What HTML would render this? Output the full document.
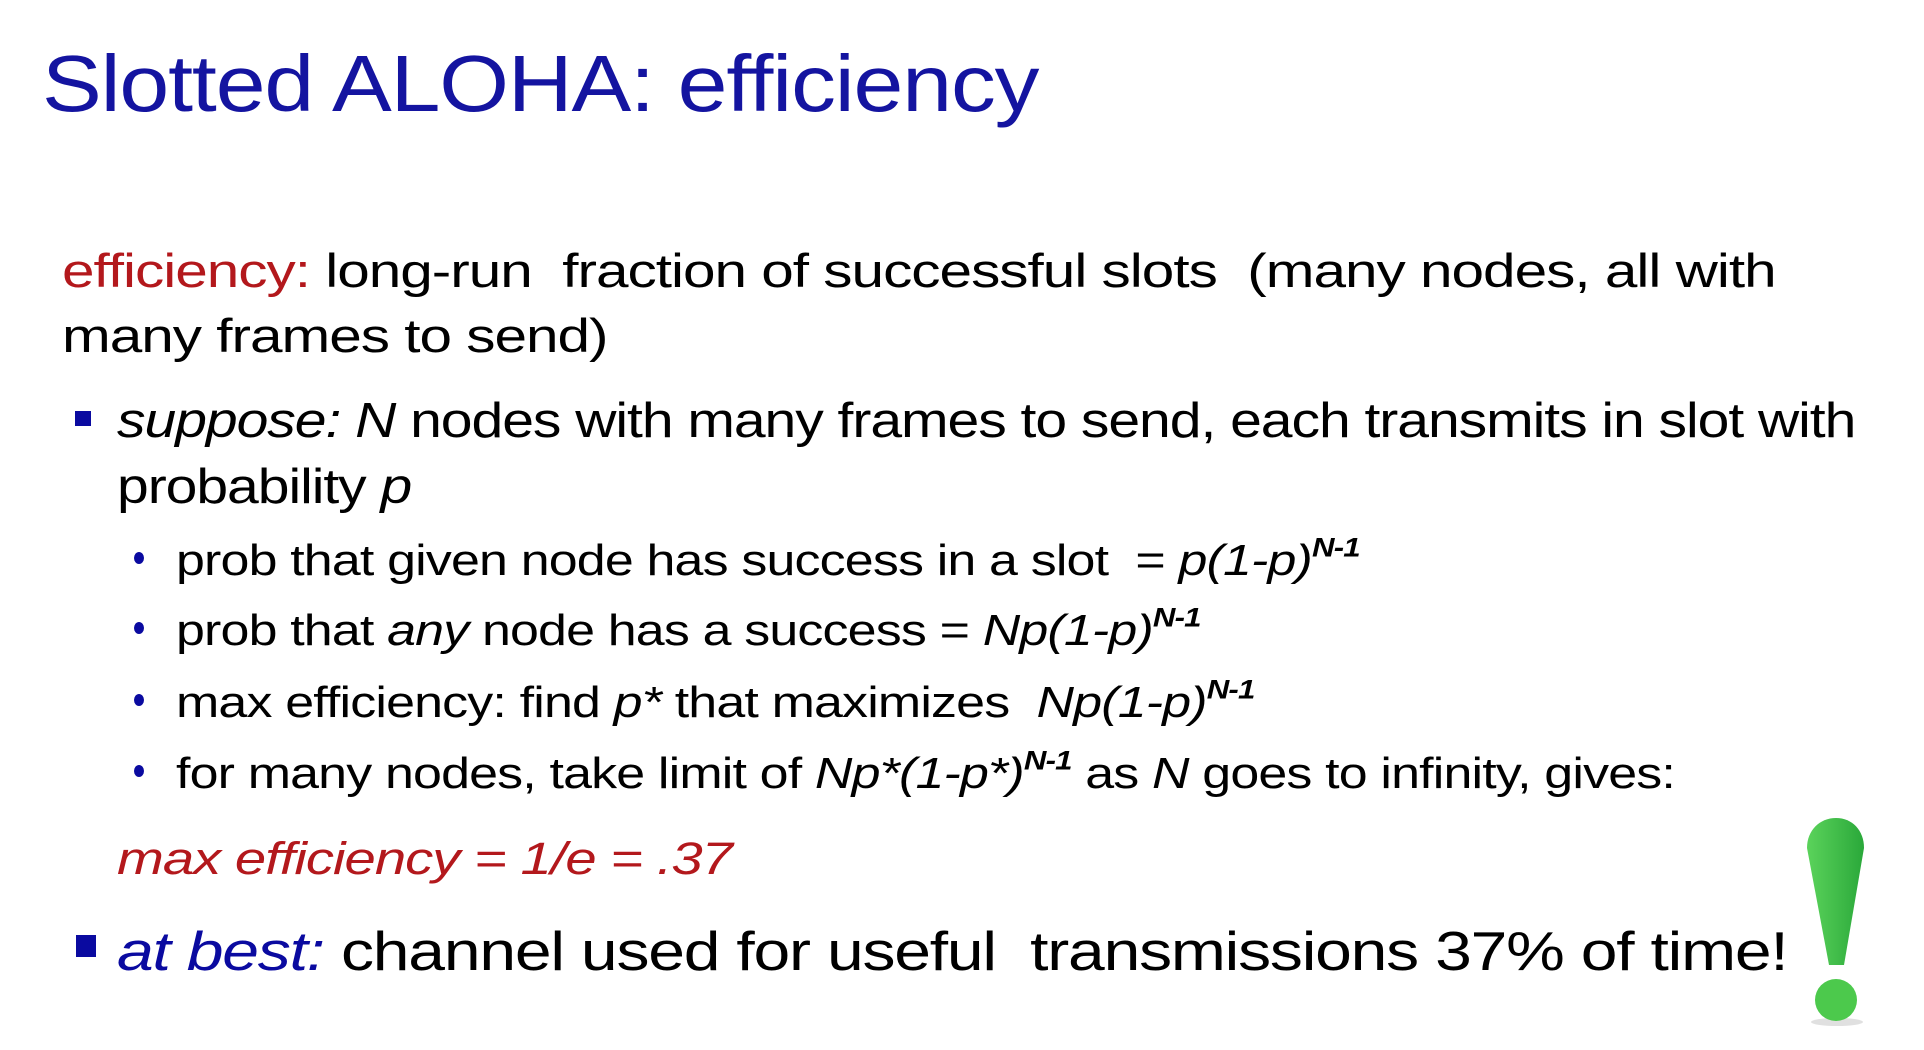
<!DOCTYPE html>
<html><head><meta charset="utf-8"><style>
body{margin:0;width:1924px;height:1050px;background:#fff;overflow:hidden;position:relative;font-family:"Liberation Sans",sans-serif;color:#000}
.l{position:absolute;white-space:nowrap;line-height:1;transform-origin:0 50%}
i{font-style:italic}
sup{font-size:0.6em;font-style:italic;font-weight:bold;vertical-align:0.7em;line-height:0}
.r{color:#b3181c}.b{color:#0a0aa0}
.sq{position:absolute;background:#0a0aa0}
.dot{position:absolute;width:10px;height:12px;border-radius:50%;background:#0a0aa0}
</style></head><body>
<div class="l b" style="left:42px;top:44px;font-size:80px;letter-spacing:-1px;color:#1414a0;transform:scaleX(1.12)">Slotted ALOHA: efficiency</div>
<div class="l" style="left:62px;top:247px;font-size:47px;letter-spacing:-0.8px;transform:scaleX(1.244)"><span class="r">efficiency:</span> long-run&nbsp; fraction of successful slots&nbsp; (many nodes, all with</div>
<div class="l" style="left:62px;top:312px;font-size:47px;letter-spacing:-0.8px;transform:scaleX(1.244)">many frames to send)</div>
<div class="sq" style="left:75px;top:411px;width:16px;height:15px"></div>
<div class="l" style="left:117px;top:397px;font-size:49px;letter-spacing:-0.9px;transform:scaleX(1.165)"><i>suppose: N</i> nodes with many frames to send, each transmits in slot with</div>
<div class="l" style="left:117px;top:463px;font-size:49px;letter-spacing:-0.9px;transform:scaleX(1.165)">probability <i>p</i></div>
<div class="dot" style="left:134px;top:552px"></div>
<div class="l" style="left:176px;top:539px;font-size:44px;letter-spacing:-0.7px;transform:scaleX(1.18)">prob that given node has success in a slot&nbsp; = <i>p(1-p)</i><sup>N-1</sup></div>
<div class="dot" style="left:134px;top:622px"></div>
<div class="l" style="left:176px;top:609px;font-size:44px;letter-spacing:-0.7px;transform:scaleX(1.18)">prob that <i>any</i> node has a success = <i>Np(1-p)</i><sup>N-1</sup></div>
<div class="dot" style="left:134px;top:694px"></div>
<div class="l" style="left:176px;top:681px;font-size:44px;letter-spacing:-0.7px;transform:scaleX(1.18)">max efficiency: find <i>p*</i> that maximizes&nbsp; <i>Np(1-p)</i><sup>N-1</sup></div>
<div class="dot" style="left:134px;top:765px"></div>
<div class="l" style="left:176px;top:752px;font-size:44px;letter-spacing:-0.7px;transform:scaleX(1.18)">for many nodes, take limit of <i>Np*(1-p*)</i><sup>N-1</sup> as <i>N</i> goes to infinity, gives:</div>
<div class="l r" style="left:117px;top:836px;font-size:45px;letter-spacing:-0.8px;transform:scaleX(1.25)"><i>max efficiency = 1/e = .37</i></div>
<div class="sq" style="left:76px;top:935px;width:20px;height:22px"></div>
<div class="l" style="left:117px;top:924px;font-size:55px;letter-spacing:-1px;transform:scaleX(1.2)"><i class="b">at best:</i> channel used for useful&nbsp; transmissions 37% of time!</div>
<svg style="position:absolute;left:1800px;top:812px" width="80" height="220" viewBox="0 0 80 220">
<defs><linearGradient id="g" x1="0" x2="1"><stop offset="0" stop-color="#5bd35b"/><stop offset="1" stop-color="#2aa83a"/></linearGradient></defs>
<ellipse cx="37" cy="210" rx="26" ry="4" fill="#ccc" opacity="0.6"/>
<path d="M36 6 C20 6 7 18 7 36 L29 153 L44 153 L64 36 C64 18 52 6 36 6 Z" fill="url(#g)"/>
<circle cx="36" cy="188" r="21" fill="#4cc94c"/>
</svg>
</body></html>
